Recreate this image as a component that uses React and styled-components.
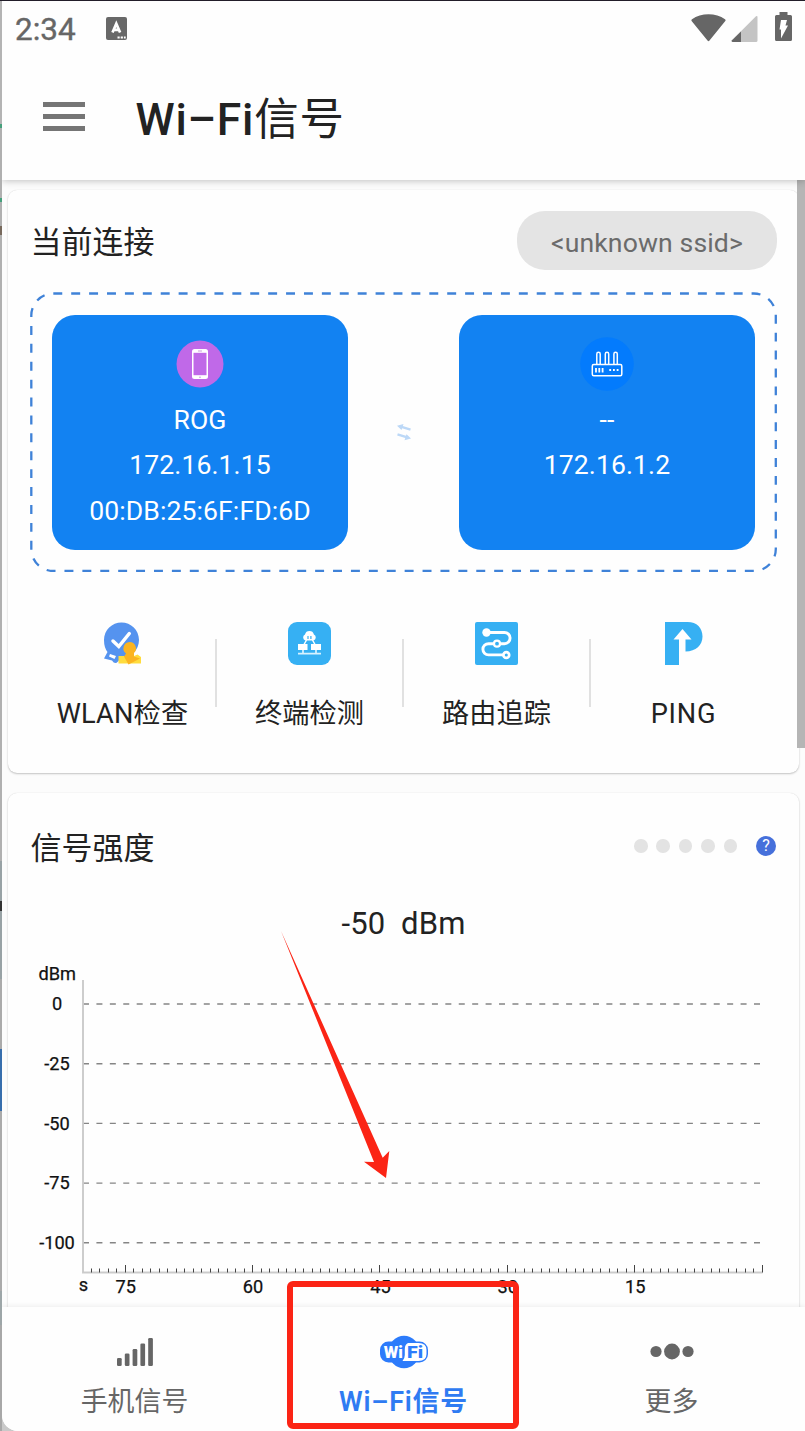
import React from "react";
import styled, { createGlobalStyle } from "styled-components";

const GlobalStyle = createGlobalStyle`
  html, body { margin: 0; padding: 0; background: #b0b0b0; }
  * { box-sizing: border-box; }
  svg { display: block; flex: none; }
`;

const FONT = `Roboto, "Noto Sans CJK SC", sans-serif`;

const Desktop = styled.div`
  position: relative;
  display: flex;
  width: 805px;
  height: 1431px;
  overflow: hidden;
  border-top: 1px solid #221d29;
  background: #c9c9c9;
  font-family: ${FONT};
  color: #222;
`;

const WindowEdge = styled.div`
  width: 2px;
  flex: none;
  background: linear-gradient(
    #b4b4b4 0 123px, #45a07c 123px 127px, #b0b0b0 127px 197px, #45a07c 197px 201px,
    #b0b0b0 201px 225px, #77695c 225px 234px, #b0b0b0 234px 860px, #98a2a5 860px 900px,
    #333 900px 910px, #98a2a5 910px 978px, #aaa 978px 1048px, #376ead 1048px 1110px,
    #aaa 1110px 1290px, #9da6a8 1290px 1324px, #a8a8a8 1324px
  );
`;

const Screen = styled.div`
  flex: 1;
  min-width: 0;
  display: flex;
  flex-direction: column;
  background: #fefefe;
  border-bottom-left-radius: 16px;
  overflow: hidden;
`;

const Header = styled.header`
  position: relative;
  z-index: 1;
  flex: none;
  height: 179px;
  background: #fefefe;
  box-shadow: 0 1px 7px rgba(0, 0, 0, 0.24);
`;

const StatusBar = styled.div`
  display: flex;
  align-items: center;
  height: 55px;
  padding: 0 13.5px 0 13px;
`;

const Clock = styled.span`
  width: 91px;
  padding-top: 2px;
  font-size: 31.5px;
  font-weight: 400;
  color: #666;
  line-height: 36px;
  -webkit-text-stroke: 0.4px #666;
`;

const StatusIcons = styled.div`
  display: flex;
  align-items: center;
  margin: -2px 0 0 auto;
`;

const Toolbar = styled.div`
  display: flex;
  align-items: center;
  height: 124px;
  padding: 0 0 3px 40.5px;
`;

const MenuButton = styled.div`
  display: flex;
  flex-direction: column;
  gap: 7px;
  width: 42px;
  span { height: 5px; background: #757575; }
`;

const Title = styled.h1`
  margin: 6px 0 0 51px;
  font-size: 44.5px;
  font-weight: 500;
  line-height: 60px;
  letter-spacing: 0.75px;
  white-space: nowrap;
`;

const TitleHan = styled.span`
  font-weight: 400;
`;

const Content = styled.main`
  flex: 1;
  min-height: 0;
  display: flex;
  flex-direction: column;
  gap: 20px;
  padding: 10px 6px 0;
  background: #fcfcfc;
  overflow: hidden;
`;

const Card = styled.section`
  flex: none;
  height: ${(p) => p.$height}px;
  padding: ${(p) => p.$top}px 22px 0;
  border-radius: 9px;
  background: #fefefe;
  box-shadow: 0 1px 2px rgba(0, 0, 0, 0.22), 0 0 1px rgba(0, 0, 0, 0.12);
`;

const CardHead = styled.div`
  display: flex;
  align-items: center;
  justify-content: space-between;
  height: 60px;
`;

const CardTitle = styled.h2`
  margin: 0;
  padding: ${(p) => p.$drop}px 0 0 0.5px;
  font-size: 31px;
  font-weight: 400;
  line-height: 44px;
`;

const Ssid = styled.div`
  width: 260px;
  height: 59px;
  border-radius: 28px;
  background: #e4e4e4;
  color: #6b6b6b;
  font-size: 26.6px;
  letter-spacing: 0.12px;
  line-height: 63px;
  text-align: center;
`;

const Link = styled.div`
  position: relative;
  display: flex;
  align-items: center;
  justify-content: space-between;
  width: 747px;
  height: 280px;
  margin-top: 22px;
  padding: 0 22.3px;
`;

const DashedFrame = styled.svg`
  position: absolute;
  inset: 0;
`;

const Device = styled.div`
  display: flex;
  flex-direction: column;
  align-items: center;
  width: 295.4px;
  height: 235px;
  padding-top: 22px;
  border-radius: 23px;
  background: #1282f2;
`;

const DeviceText = styled.div`
  color: #fff;
  font-size: 26.6px;
  letter-spacing: 0.08px;
  line-height: 45.5px;
`;

const DeviceIcon = styled.svg`
  margin-bottom: 6px;
`;

const Tools = styled.div`
  display: flex;
  margin: 50px 0 0 -1px;
`;

const Tool = styled.div`
  position: relative;
  flex: 1;
  display: flex;
  flex-direction: column;
  align-items: center;
  height: 110px;
  &:not(:last-child)::after {
    content: "";
    position: absolute;
    right: -1px;
    top: 17px;
    width: 2px;
    height: 68px;
    background: #e1e1e1;
  }
`;

const ToolLabel = styled.span`
  margin-top: 29px;
  font-size: 27.2px;
  line-height: 40px;
  letter-spacing: ${(p) => p.$spacing ?? 0}px;
`;

const Rating = styled.div`
  display: flex;
  align-items: center;
  gap: 8.9px;
  margin: -2px 1px 0 0;
`;

const Dot = styled.span`
  width: 13.5px;
  height: 13.5px;
  border-radius: 50%;
  background: #e3e3e3;
`;

const Help = styled.span`
  width: 20px;
  height: 20px;
  margin-left: 10px;
  border-radius: 50%;
  background: #4670db;
  color: #fff;
  font-size: 16px;
  line-height: 20.5px;
  text-align: center;
`;

const Reading = styled.div`
  margin-top: 26px;
  font-size: 31px;
  line-height: 42px;
  letter-spacing: 0.15px;
  text-align: center;
  white-space: pre;
`;

const Chart = styled.svg`
  margin: 3px 0 0 -22px;
  text { font-family: Roboto, sans-serif; font-size: 18.2px; fill: #111; stroke: #111; stroke-width: 0.25px; text-anchor: middle; }
`;

const NavBar = styled.nav`
  position: relative;
  flex: none;
  display: grid;
  grid-template-columns: 265px 273px 263px;
  height: 124px;
  background: #fefefe;
  box-shadow: 0 -1px 5px rgba(0, 0, 0, 0.07);
`;

const NavItem = styled.div`
  display: flex;
  flex-direction: column;
  align-items: center;
  padding-top: 28px;
  color: ${(p) => (p.$active ? "#2f7bf2" : "#666")};
  font-size: 26.9px;
  font-weight: ${(p) => (p.$active ? 600 : 400)};
`;

const NavLabel = styled.span`
  margin-top: 13px;
  line-height: 40px;
  letter-spacing: ${(p) => p.$spacing ?? 0}px;
`;

const Scrollbar = styled.div`
  position: absolute;
  z-index: 0;
  right: 0;
  top: 179px;
  width: 8px;
  height: 568px;
  background: #b5b5b5;
`;

const Highlight = styled.div`
  position: absolute;
  z-index: 2;
  left: 287px;
  top: 1280px;
  width: 232px;
  height: 148px;
  border: 6px solid #fb2415;
  border-radius: 6px;
`;

const Arrow = styled.svg`
  position: absolute;
  z-index: 2;
  left: 280px;
  top: 929px;
`;

const KeyboardIcon = () => (
  <svg width="21" height="23" viewBox="0 0 21 23">
    <rect width="21" height="23" rx="2" fill="#686868" />
    <path d="M6.500 15.500 10.300 6.700 14.100 15.500M8.200 12.800h4.600" fill="none" stroke="#fff" strokeWidth="2.700" />
    <path d="M11.500 19.500h2.200v2h-2.200zM14.700 19.500h2.200v2h-2.200zM17.900 19.500h1.800v2h-1.800z" fill="#fff" />
  </svg>
);

const WifiStatus = () => (
  <svg width="35" height="28" viewBox="0 0 35 28">
    <path d="M.6 7Q0 6 1 5.200C10-1.400 25-1.400 34 5.200Q35 6 34.300 7L18.500 26.500Q17.500 27.900 16.500 26.500Z" fill="#666" />
  </svg>
);

const CellStatus = () => (
  <svg width="27" height="26" viewBox="0 0 27 26" style={{ margin: "2px 0 0 5px" }}>
    <path d="M25 .3Q26.500-.3 26.500 1V24.500Q26.500 26 25 26H1.500Q0 25.500 1 24.300Z" fill="#c4c4c4" />
    <path d="M10 15.500V26H1.500Q0 25.500 1 24.300Z" fill="#666" />
  </svg>
);

const BatteryStatus = () => (
  <svg width="17" height="30" viewBox="0 0 17 30" style={{ margin: "-1px 0 0 17px" }}>
    <path d="M4.500 0H12.500V3H15.500Q17 3 17 4.500V27.500Q17 29 15.500 29H1.500Q0 29 0 27.500V4.500Q0 3 1.500 3H4.500Z" fill="#666" />
    <path d="M6 8H12L10.500 13.500H13L6 26.500V17.500H4.500Z" fill="#fff" />
  </svg>
);

const PhoneIcon = () => (
  <DeviceIcon width="54" height="54" viewBox="0 0 54 54">
    <circle cx="27" cy="27" r="23.500" fill="#c069e8" />
    <rect x="19" y="12" width="16" height="30" rx="2.500" fill="#fff" />
    <path d="M20.500 15.800h13v22.400h-13z" fill="#c069e8" />
    <path d="M25 14h4M26 40.200h2" stroke="#c9a0dd" strokeWidth="1" />
  </DeviceIcon>
);

const RouterIcon = () => (
  <DeviceIcon width="54" height="54" viewBox="0 0 54 54">
    <circle cx="27" cy="27" r="26.800" fill="#037bfd" />
    <g fill="none" stroke="#fff" strokeWidth="1.500">
      <rect x="12.300" y="27.500" width="29.500" height="11.300" rx="1.500" />
      <path d="M16.800 27V17a1.700 1.700 0 0 1 3.400 0V27M25.300 27V17a1.700 1.700 0 0 1 3.400 0V27M33.900 27V17a1.700 1.700 0 0 1 3.400 0V27" />
      <path d="M16 31v4.500M19.300 31v4.500M22.600 31v4.500" strokeWidth="1.800" />
      <path d="M29.300 33h1.800M33 33h1.800M36.700 33h1.800" strokeWidth="1.900" />
    </g>
  </DeviceIcon>
);

const SwapIcon = () => (
  <svg width="14" height="17" viewBox="0 0 14 17">
    <path d="M3 2.300 13.500 5.700M.5 10.300 11 13.700" stroke="#bcd8f7" strokeWidth="2.400" />
    <path d="M0 1.700 6.500 0 4.500 6ZM14 14.500 7.500 16.300 9.500 10.300Z" fill="#bcd8f7" />
  </svg>
);

const CheckToolIcon = () => (
  <svg width="43" height="43" viewBox="1 0 43 43">
    <path d="M21.500.500C31 .500 39 8 39 18 39 28 31 35.500 21.500 35.500L18 39.500Q15 43 12 38.500L4 36.500 7.500 30Q4 25.500 4 18C4 8 12 .500 21.500 .500Z" fill="#5593ef" />
    <path d="M13 19 18.800 24.500 29.300 11.500" fill="none" stroke="#fff" strokeWidth="3.500" strokeLinecap="round" />
    <path d="M10 32 16 34 14.500 37 9 34.500Z" fill="#fff" />
    <path d="M18.500 34H34L37.500 32.500 41 35V41.500H18.500Z" fill="#ffdc3d" />
    <path d="M29.500 20a6.400 6.400 0 0 1 4.500 11V34.500L40 36.500 28.500 42.500 24 34.500 26 31.500A6.400 6.400 0 0 1 29.500 20Z" fill="#fbb421" />
  </svg>
);

const TerminalToolIcon = () => (
  <svg width="43" height="43" viewBox="0 0 43 43">
    <rect width="43" height="43" rx="9" fill="#36b0f3" />
    <path d="M17.500 18.500a3.200 3.200 0 0 1-.500-6 4.600 4.600 0 0 1 8.900 0 3.200 3.200 0 0 1-.500 6Z" fill="#fff" />
    <path d="M20 14v3M22.900 14v3" stroke="#36b0f3" strokeWidth="1.200" />
    <path d="M18.500 18 16 22.500M24.500 18 27 22.500" stroke="#fff" strokeWidth="1.500" />
    <path d="M10 22h9.500v6H10zM23 22h10v6H23z" fill="#fff" />
    <path d="M10 31.700H33M15 28v4M28 28v4" stroke="#d8f2ff" strokeWidth="1.700" />
  </svg>
);

const RouteToolIcon = () => (
  <svg width="43" height="43" viewBox="0 0 43 43">
    <rect width="43" height="43" rx="2" fill="#36b0f3" />
    <path d="M12 10.500H29.500a5.600 5.600 0 0 1 0 11.200H13.500a5.600 5.600 0 0 0 0 11.200H31" fill="none" stroke="#fff" strokeWidth="2.900" />
    <circle cx="11.500" cy="10.500" r="4.200" fill="#fff" />
    <circle cx="22" cy="21.700" r="3" fill="#36b0f3" stroke="#fff" strokeWidth="2.200" />
    <circle cx="31.300" cy="33" r="2.900" fill="#36b0f3" stroke="#fff" strokeWidth="2.700" />
  </svg>
);

const PingToolIcon = () => (
  <svg width="43" height="43" viewBox="0 0 43 43">
    <path d="M3 0H25.500C35 0 40.500 6 40.500 14.500S34 29.500 23.500 29.500V17.500H29.500L20.500 7 11.500 17.500H17V43H3Z" fill="#36b0f3" />
  </svg>
);

const BarsIcon = () => (
  <svg width="36" height="34" viewBox="0 0 36 34">
    {[8, 12.5, 17, 22.5, 28].map((h, i) => (
      <rect key={h} x={i * 7.8} y={31 - h} width="4.700" height={h} rx="1.300" fill="#666" />
    ))}
  </svg>
);

const WifiLogo = () => (
  <svg width="48" height="34" viewBox="0 0 48 34">
    <ellipse cx="24" cy="17" rx="15.500" ry="16.300" fill="#2c7bfb" />
    <rect x="0" y="6.500" width="48" height="21" rx="8.500" fill="#2c7bfb" />
    <path d="M28 8H38.500Q46.500 8 46.500 15V19Q46.500 26 38.500 26H22.500Q24.800 23.500 24.800 20V14Q24.800 9.500 28 8Z" fill="#fff" />
    <g fontFamily="Roboto, sans-serif" fontSize="16" fontWeight="900">
      <text x="3.800" y="22.800" textLength="19" lengthAdjust="spacingAndGlyphs" fill="#fff">Wi</text>
      <text x="27" y="22.800" textLength="16" lengthAdjust="spacingAndGlyphs" fill="#2c7bfb">Fi</text>
    </g>
  </svg>
);

const MoreIcon = () => (
  <svg width="44" height="34" viewBox="0 0 44 34" fill="#666">
    <circle cx="6" cy="16.500" r="5.600" />
    <circle cx="22" cy="16.500" r="7.900" />
    <circle cx="38" cy="16.500" r="5.600" />
  </svg>
);

const LEVELS = [0, -25, -50, -75, -100];
const STEP = 8.49;
const RIGHT = 754.5;

function SignalChart() {
  return (
    <Chart width="790" height="370" viewBox="0 0 790 370">
      <text x="49.300" y="32">dBm</text>
      {LEVELS.map((v, i) => (
        <g key={v}>
          <text x="49" y={62.3 + i * 59.7}>{v}</text>
          <path d={`M75 ${56 + i * 59.7}H753`} stroke="#858585" strokeWidth="1.400" strokeDasharray="6 7.420" />
        </g>
      ))}
      <path d={`M75 32V324.500H${RIGHT}`} fill="none" stroke="#cbcbcb" strokeWidth="1.900" />
      {Array.from({ length: 80 }, (_, s) => {
        const x = Math.round(RIGHT - s * STEP) - 0.5;
        return <path key={s} d={`M${x} ${s % 15 ? 320.5 : 317}V324.500`} stroke="#444" strokeWidth="1" />;
      })}
      <text x="75.500" y="343">s</text>
      {[75, 60, 45, 30, 15].map((s) => (
        <text key={s} x={RIGHT - s * STEP} y="345">{s}</text>
      ))}
    </Chart>
  );
}

const TOOLS = [
  { label: "WLAN检查", Icon: CheckToolIcon, spacing: 0.2 },
  { label: "终端检测", Icon: TerminalToolIcon },
  { label: "路由追踪", Icon: RouteToolIcon },
  { label: "PING", Icon: PingToolIcon, spacing: 0.8 },
];

export default function App() {
  return (
    <Desktop>
      <GlobalStyle />
      <WindowEdge />
      <Screen>
        <Header>
          <StatusBar>
            <Clock>2:34</Clock>
            <KeyboardIcon />
            <StatusIcons>
              <WifiStatus />
              <CellStatus />
              <BatteryStatus />
            </StatusIcons>
          </StatusBar>
          <Toolbar>
            <MenuButton><span /><span /><span /></MenuButton>
            <Title>Wi–Fi<TitleHan>信号</TitleHan></Title>
          </Toolbar>
        </Header>
        <Content>
          <Card $height={583} $top={20}>
            <CardHead>
              <CardTitle $drop={6}>当前连接</CardTitle>
              <Ssid>&lt;unknown ssid&gt;</Ssid>
            </CardHead>
            <Link>
              <DashedFrame width="747" height="280">
                <rect x="1.300" y="1.500" width="744.500" height="277.500" rx="22" fill="none" stroke="#3f82d8" strokeWidth="2.300" pathLength="224" strokeDasharray="1 1" />
              </DashedFrame>
              <Device>
                <PhoneIcon />
                <DeviceText>ROG</DeviceText>
                <DeviceText>172.16.1.15</DeviceText>
                <DeviceText>00:DB:25:6F:FD:6D</DeviceText>
              </Device>
              <SwapIcon />
              <Device>
                <RouterIcon />
                <DeviceText>--</DeviceText>
                <DeviceText>172.16.1.2</DeviceText>
              </Device>
            </Link>
            <Tools>
              {TOOLS.map(({ label, Icon, spacing }) => (
                <Tool key={label}>
                  <Icon />
                  <ToolLabel $spacing={spacing}>{label}</ToolLabel>
                </Tool>
              ))}
            </Tools>
          </Card>
          <Card $height={560} $top={24}>
            <CardHead>
              <CardTitle $drop={3}>信号强度</CardTitle>
              <Rating>
                {[1, 2, 3, 4, 5].map((n) => <Dot key={n} />)}
                <Help>?</Help>
              </Rating>
            </CardHead>
            <Reading>{"-50  dBm"}</Reading>
            <SignalChart />
          </Card>
        </Content>
        <NavBar>
          <NavItem>
            <BarsIcon />
            <NavLabel>手机信号</NavLabel>
          </NavItem>
          <NavItem $active>
            <WifiLogo />
            <NavLabel $spacing={0.8}>Wi–Fi信号</NavLabel>
          </NavItem>
          <NavItem>
            <MoreIcon />
            <NavLabel>更多</NavLabel>
          </NavItem>
        </NavBar>
      </Screen>
      <Scrollbar />
      <Arrow width="112" height="250" viewBox="280 930 112 250">
        <path d="M281 931 382.700 1157.700 389.300 1151 386 1178 364 1161.700 374 1162Z" fill="#fb2415" />
      </Arrow>
      <Highlight />
    </Desktop>
  );
}
